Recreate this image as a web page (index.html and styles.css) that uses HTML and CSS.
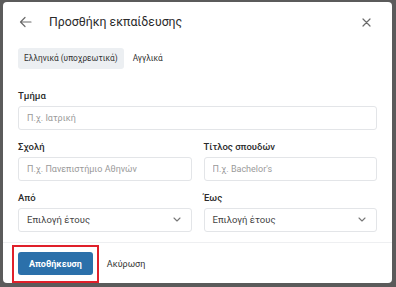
FILE: index.html
```html
<!DOCTYPE html>
<html lang="el">
<head>
    <meta charset="UTF-8">
    <meta name="viewport" content="width=device-width, initial-scale=1.0">
    <title>Προσθήκη εκπαίδευσης</title>
    <link rel="stylesheet" href="styles.css">
</head>
<body>
    <div class="dialog">
        <div class="dialog-header">
            <button class="icon-button back" aria-label="Πίσω">
                <svg width="13" height="12" viewBox="0 0 13 12" fill="none" stroke="currentColor" stroke-width="1.2" stroke-linecap="round" stroke-linejoin="round">
                    <path d="M12 6H1.5M6 1.5L1.5 6 6 10.5"/>
                </svg>
            </button>
            <h1>Προσθήκη εκπαίδευσης</h1>
            <button class="icon-button close" aria-label="Κλείσιμο">
                <svg width="9" height="9" viewBox="0 0 9 9" fill="none" stroke="currentColor" stroke-width="1.2" stroke-linecap="round">
                    <path d="M1 1l7 7M8 1L1 8"/>
                </svg>
            </button>
        </div>

        <div class="tabs">
            <button class="tab active">Ελληνικά (υποχρεωτικά)</button>
            <button class="tab">Αγγλικά</button>
        </div>

        <form class="form">
            <div class="field">
                <label for="department">Τμήμα</label>
                <input type="text" id="department" class="text-input" placeholder="Π.χ. Ιατρική">
            </div>
            <div class="row">
                <div class="field">
                    <label for="school">Σχολή</label>
                    <input type="text" id="school" class="text-input" placeholder="Π.χ. Πανεπιστήμιο Αθηνών">
                </div>
                <div class="field">
                    <label for="degree">Τίτλος σπουδών</label>
                    <input type="text" id="degree" class="text-input" placeholder="Π.χ. Bachelor's">
                </div>
            </div>
            <div class="row">
                <div class="field">
                    <label>Από</label>
                    <div class="select">
                        <span>Επιλογή έτους</span>
                        <svg width="8" height="5" viewBox="0 0 8 5" fill="none" stroke="currentColor" stroke-width="1.1" stroke-linecap="round" stroke-linejoin="round"><path d="M1 1l3 3 3-3"/></svg>
                    </div>
                </div>
                <div class="field">
                    <label>Έως</label>
                    <div class="select">
                        <span>Επιλογή έτους</span>
                        <svg width="8" height="5" viewBox="0 0 8 5" fill="none" stroke="currentColor" stroke-width="1.1" stroke-linecap="round" stroke-linejoin="round"><path d="M1 1l3 3 3-3"/></svg>
                    </div>
                </div>
            </div>
        </form>

        <div class="dialog-footer">
            <div class="highlight">
                <button class="save-button">Αποθήκευση</button>
            </div>
            <button class="cancel-button">Ακύρωση</button>
        </div>
    </div>
</body>
</html>
```

FILE: styles.css
```css
:root {
    --backdrop: #5b5b5b;
    --card-background: #ffffff;
    --text-primary: #2b2b2b;
    --text-secondary: #444444;
    --placeholder: #9a9a9a;
    --border-color: #e3e5e8;
    --tab-background: #eceff2;
    --accent-blue: #2b70aa;
    --highlight-red: #e0202a;
}

* {
    box-sizing: border-box;
}

body {
    background-color: var(--backdrop);
    font-family: Roboto, "Noto Sans", sans-serif;
    color: var(--text-primary);
    margin: 0;
    padding: 2px 4px 0 3px;
    height: 287px;
    overflow: hidden;
}

.dialog {
    background-color: var(--card-background);
    border-radius: 4px;
    width: 389px;
    height: 281px;
    display: flex;
    flex-direction: column;
}

.dialog-header {
    display: flex;
    align-items: center;
    height: 18px;
    margin: 12px 0 0 0;
    padding: 0 21px 0 16px;
}

.icon-button {
    border: none;
    background: none;
    padding: 0;
    color: #6b6b6b;
    display: flex;
    align-items: center;
    cursor: pointer;
}

.dialog-header h1 {
    flex: 1;
    font-size: 12.3px;
    font-weight: 400;
    margin: 0 0 0 17px;
    color: var(--text-primary);
}

.tabs {
    display: flex;
    gap: 3px;
    margin: 17px 0 0 15px;
}

.tab {
    font-family: inherit;
    font-size: 8.3px;
    color: #333;
    border: none;
    background: none;
    border-radius: 3px;
    height: 21px;
    padding: 0 6px;
    cursor: pointer;
}

.tab.active {
    background-color: var(--tab-background);
}

.form {
    display: flex;
    flex-direction: column;
    gap: 10px;
    padding: 20px 15px 0 15px;
}

.row {
    display: grid;
    grid-template-columns: 1fr 1fr;
    gap: 12px;
}

.field label {
    display: block;
    font-size: 9.5px;
    font-weight: 500;
    line-height: 14px;
    margin-bottom: 3px;
    color: var(--text-primary);
}

.text-input,
.select {
    width: 100%;
    height: 24px;
    border: 1px solid var(--border-color);
    border-radius: 3px;
    padding: 0 8px;
    font-family: inherit;
    font-size: 9px;
    color: var(--text-primary);
    background: #fff;
}

.text-input::placeholder {
    color: var(--placeholder);
}

.select {
    display: flex;
    align-items: center;
    justify-content: space-between;
    font-size: 9.5px;
    color: var(--text-secondary);
}

.select svg {
    color: #777;
    margin-right: 2px;
}

.dialog-footer {
    margin-top: 10px;
    border-top: 1px solid #eeeff1;
    display: flex;
    align-items: center;
    gap: 8px;
    padding: 2px 0 0 9px;
}

.highlight {
    border: 2px solid var(--highlight-red);
    padding: 5px 4px 6px 4px;
}

.save-button {
    font-family: inherit;
    background-color: var(--accent-blue);
    color: #fff;
    border: none;
    border-radius: 3px;
    font-size: 9px;
    font-weight: 700;
    height: 23px;
    padding: 0 11px;
    cursor: pointer;
}

.cancel-button {
    font-family: inherit;
    border: none;
    background: none;
    font-size: 9px;
    color: #333;
    padding: 0;
    cursor: pointer;
}
```
